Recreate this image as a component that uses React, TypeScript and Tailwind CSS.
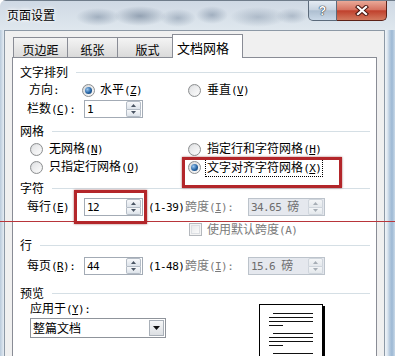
import React from "react";

function T({ s, className = "" }: { s: string; className?: string }) {
  const parts: { ascii: boolean; nodes: React.ReactNode[] }[] = [];
  let k = 0;
  for (let i = 0; i < s.length; i++) {
    let c = s[i];
    let u = false;
    if (c === "&") {
      u = true;
      i++;
      c = s[i];
    }
    const ascii = c.charCodeAt(0) < 128;
    let last = parts[parts.length - 1];
    if (!last || last.ascii !== ascii) {
      last = { ascii, nodes: [] };
      parts.push(last);
    }
    const ch = c === " " ? "\u00a0" : c;
    last.nodes.push(
      u ? (
        <span key={k++} className="underline underline-offset-[1px]">
          {ch}
        </span>
      ) : (
        <React.Fragment key={k++}>{ch}</React.Fragment>
      )
    );
  }
  return (
    <span className={`whitespace-nowrap ${className}`}>
      {parts.map((p, i) =>
        p.ascii ? (
          <span key={i} className="[font-family:DejaVu_Sans_Mono,monospace] text-[11px] tracking-[-0.6px]">
            {p.nodes}
          </span>
        ) : (
          <span key={i}>{p.nodes}</span>
        )
      )}
    </span>
  );
}

function Radio({ checked = false }: { checked?: boolean }) {
  return (
    <span className="flex h-[13px] w-[13px] shrink-0 items-center justify-center rounded-full border border-[#8c8e90] bg-[linear-gradient(135deg,#d6d8da,#fafafa)]">
      {checked ? (
        <span className="h-[7px] w-[7px] rounded-full bg-[radial-gradient(circle_at_35%_35%,#9cc8f0,#2563a3_55%,#0e3661)]" />
      ) : (
        <span className="h-[9px] w-[9px] rounded-full bg-[linear-gradient(135deg,#e2e3e5,#fbfbfb)]" />
      )}
    </span>
  );
}

function Arrow({ up, color }: { up?: boolean; color: string }) {
  return (
    <svg width="5" height="3" viewBox="0 0 5 3">
      <path d={up ? "M2.5 0L5 3H0Z" : "M0 0H5L2.5 3Z"} fill={color} />
    </svg>
  );
}

function Spin({ value, className = "", disabled = false }: { value: string; className?: string; disabled?: boolean }) {
  const btn = disabled
    ? "border-[#cfd5dc] bg-[linear-gradient(#f3f5f7,#e4e8ec)]"
    : "border-[#b4bcc6] bg-[linear-gradient(#f7f8fa,#dde3ea)]";
  const ac = disabled ? "#a6adb5" : "#4a5563";
  return (
    <div
      className={`flex h-[18px] shrink-0 items-center border ${
        disabled ? "border-[#bcc3cb] bg-[#e5e8ee] text-[#6d6d6d]" : "border-[#a3abb5] bg-white text-black"
      } ${className}`}
    >
      <span className="flex-1 pl-[2px]">
        <T s={value} />
      </span>
      <div className="mr-px flex h-[16px] w-[15px] flex-col">
        <div className={`flex flex-1 items-center justify-center rounded-t-[2px] border ${btn}`}>
          <Arrow up color={ac} />
        </div>
        <div className={`flex flex-1 items-center justify-center rounded-b-[2px] border border-t-0 ${btn}`}>
          <Arrow color={ac} />
        </div>
      </div>
    </div>
  );
}

function Group({ label, className = "" }: { label: string; className?: string }) {
  return (
    <div className={`flex items-center ${className}`}>
      <T s={label} />
      <div className="ml-[8px] h-px flex-1 bg-[#d5dfe5]" />
    </div>
  );
}

function Para() {
  return (
    <div className="flex flex-col gap-[3px]">
      <div className="ml-[4px] h-px w-[40px] bg-[#111]" />
      <div className="h-px w-[44px] bg-[#111]" />
      <div className="h-px w-[44px] bg-[#111]" />
      <div className="h-px w-[14px] bg-[#111]" />
    </div>
  );
}

export default function App() {
  return (
    <div className="relative flex h-[356px] w-[395px] flex-col overflow-hidden rounded-tl-[6px] bg-white text-[12px] leading-[14px] text-black [font-family:Noto_Sans_CJK_SC,sans-serif]">
      {/* Title bar */}
      <div className="flex h-[30px] shrink-0 items-start border-t border-[#6f7c8a] bg-[radial-gradient(22px_9px_at_98px_16px,rgba(95,115,140,0.45),transparent),radial-gradient(26px_10px_at_140px_15px,rgba(80,100,125,0.5),transparent),radial-gradient(18px_9px_at_178px_17px,rgba(95,115,140,0.4),transparent),radial-gradient(16px_9px_at_212px_14px,rgba(95,115,140,0.45),transparent),radial-gradient(28px_10px_at_258px_16px,rgba(95,115,140,0.35),transparent),radial-gradient(16px_8px_at_292px_15px,rgba(95,115,140,0.35),transparent),linear-gradient(#cfd9e4,#dfe7ee)]">
        <span className="ml-[7px] mt-[7px] [text-shadow:0_0_5px_#fff,0_0_3px_#fff]">页面设置</span>
        <div className="ml-auto mr-[8px] flex">
          <div className="flex h-[20px] w-[29px] items-center justify-center rounded-bl-[5px] border border-t-0 border-[#5b6a7b] bg-[linear-gradient(#e4ebf3,#c8d4e1_45%,#aebfd1_52%,#c9d8e7)]">
            <span className="text-[12px] font-bold leading-none text-white [font-family:Liberation_Sans,sans-serif] [text-shadow:0_0_1px_#2c3540,0_0_1px_#2c3540,0_0_1px_#2c3540]">
              ?
            </span>
          </div>
          <div className="flex h-[20px] w-[50px] items-center justify-center rounded-br-[5px] border border-l-0 border-t-0 border-[#5b2118] bg-[linear-gradient(#eaa998,#d67462_45%,#c0412d_52%,#d37a5f)]">
            <svg width="14" height="11" viewBox="0 0 14 11">
              <path d="M3 2L11 9M11 2L3 9" stroke="#4a1710" strokeWidth="4.2" strokeLinecap="square" />
              <path d="M3 2L11 9M11 2L3 9" stroke="#ffffff" strokeWidth="2.2" strokeLinecap="square" />
            </svg>
          </div>
        </div>
      </div>

      {/* Body */}
      <div className="flex flex-1">
        <div className="w-[4px] shrink-0 bg-[linear-gradient(90deg,#b9cadb,#e6edf4)]" />
        <div className="flex flex-1 flex-col border-x border-t border-[#8d99a6] bg-[#f0f0f0] px-[7px] pt-[3px]">
          {/* Tabs */}
          <div className="flex h-[23px] items-end pl-px">
            <div className="flex h-[20px] w-[55px] items-start justify-center border border-b-0 border-[#898c95] bg-[linear-gradient(#f4f4f4,#e7e7e7_50%,#dadada)] pt-[5px]">
              <span>页边距</span>
            </div>
            <div className="-ml-px flex h-[20px] w-[51px] items-start justify-center border border-b-0 border-[#898c95] bg-[linear-gradient(#f4f4f4,#e7e7e7_50%,#dadada)] pt-[5px]">
              <span>纸张</span>
            </div>
            <div className="-ml-px flex h-[20px] w-[56px] items-start justify-center border border-b-0 border-[#898c95] bg-[linear-gradient(#f4f4f4,#e7e7e7_50%,#dadada)] pl-[5px] pt-[5px]">
              <span>版式</span>
            </div>
            <div className="relative z-10 -mb-px -ml-px flex h-[24px] w-[71px] items-start border border-b-0 border-[#898c95] bg-white pl-[4px] pt-[6px] text-[13px]">
              <span>文档网格</span>
            </div>
          </div>

          {/* Panel */}
          <div className="flex flex-col border border-[#898c95] bg-white pb-[40px] pl-[7px] pr-[6px]">
            <Group label="文字排列" className="mt-[5px] h-[18px]" />
            <div className="flex h-[18px] items-center">
              <span className="ml-[9px] w-[53px]">
                <T s="方向:" />
              </span>
              <div className="flex w-[106px] items-center">
                <Radio checked />
                <T s="水平(&Z)" className="ml-[5px]" />
              </div>
              <Radio />
              <T s="垂直(&V)" className="ml-[6px]" />
            </div>
            <div className="mt-px flex h-[18px] items-center">
              <span className="ml-[7px] w-[57px]">
                <T s="栏数(&C):" />
              </span>
              <Spin value="1" className="w-[59px]" />
            </div>

            <Group label="网格" className="mt-[4px] h-[18px]" />
            <div className="flex h-[18px] items-center">
              <div className="ml-[10px] flex w-[158px] items-center">
                <Radio />
                <T s="无网格(&N)" className="ml-[6px]" />
              </div>
              <Radio />
              <T s="指定行和字符网格(&H)" className="ml-[6px]" />
            </div>
            <div className="flex h-[18px] items-center">
              <div className="ml-[10px] flex w-[158px] items-center">
                <Radio />
                <T s="只指定行网格(&O)" className="ml-[6px]" />
              </div>
              <Radio checked />
              <span className="ml-[4px] inline-block border border-dotted border-black px-px leading-[15px]">
                <T s="文字对齐字符网格(&X)" />
              </span>
            </div>

            <Group label="字符" className="mt-[3px] h-[18px]" />
            <div className="mt-px flex h-[18px] items-center">
              <span className="ml-[7px] w-[57px]">
                <T s="每行(&E)" />
              </span>
              <Spin value="12" className="w-[59px]" />
              <span className="ml-[5px] w-[37px]">
                <T s="(1-39)" />
              </span>
              <span className="w-[63px] text-[#7a7a7a]">
                <T s="跨度(&I):" />
              </span>
              <Spin value="34.65 磅" className="w-[77px]" disabled />
            </div>
            <div className="mt-[6px] flex h-[15px] items-center">
              <span className="ml-[169px] flex h-[13px] w-[13px] items-center justify-center border border-[#b4b8bd] bg-[#f4f4f4]">
                <span className="h-[9px] w-[9px] border border-[#dcdfe3] bg-[linear-gradient(135deg,#e8eaec,#fafafa)]" />
              </span>
              <T s="使用默认跨度(A)" className="ml-[5px] text-[#7a7a7a]" />
            </div>

            <Group label="行" className="h-[16px]" />
            <div className="mt-[4px] flex h-[18px] items-center">
              <span className="ml-[7px] w-[57px]">
                <T s="每页(&R):" />
              </span>
              <Spin value="44" className="w-[59px]" />
              <span className="ml-[5px] w-[37px]">
                <T s="(1-48)" />
              </span>
              <span className="w-[63px] text-[#7a7a7a]">
                <T s="跨度(&I):" />
              </span>
              <Spin value="15.6 磅" className="w-[77px]" disabled />
            </div>

            <Group label="预览" className="mt-[9px] h-[18px]" />
            <div className="flex items-start">
              <div className="ml-[10px] flex w-[146px] flex-col">
                <div className="flex h-[14px] items-center">
                  <T s="应用于(&Y):" />
                </div>
                <div className="mt-[2px] flex h-[20px] w-[136px] items-center border border-[#8f949b] bg-white">
                  <span className="flex-1 pl-[2px]">
                    <T s="整篇文档" />
                  </span>
                  <span className="mr-px flex h-[16px] w-[15px] items-center justify-center border border-[#a9b0b8] bg-[linear-gradient(#f6f7f8,#dcdfe3)]">
                    <svg width="7" height="4" viewBox="0 0 7 4">
                      <path d="M0 0H7L3.5 4Z" fill="#111" />
                    </svg>
                  </span>
                </div>
              </div>
              <div className="ml-[83px] mt-[2px] flex h-[70px] w-[64px] flex-col gap-[7px] border border-black bg-white pl-[9px] pt-[8px] shadow-[2px_2px_0_#000]">
                <Para />
                <Para />
                <Para />
              </div>
            </div>
          </div>
        </div>
        <div className="w-[10px] shrink-0 bg-[linear-gradient(90deg,#eef3f8,#e2eaf2_20%,#b7cbdf_45%,#9cb8d4_70%,#c9d9e8)]" />
      </div>

      {/* Annotations */}
      <div className="absolute left-0 top-[221px] h-px w-full bg-[#b8353a]" />
      <div className="absolute left-[74px] top-[190px] h-[34px] w-[73px] border-[3px] border-[#b3262a] shadow-[0_0_2px_rgba(110,0,0,0.6)]" />
      <div className="absolute left-[182px] top-[157px] h-[31px] w-[160px] border-[3px] border-[#b3262a] shadow-[0_0_2px_rgba(110,0,0,0.6)]" />
    </div>
  );
}
